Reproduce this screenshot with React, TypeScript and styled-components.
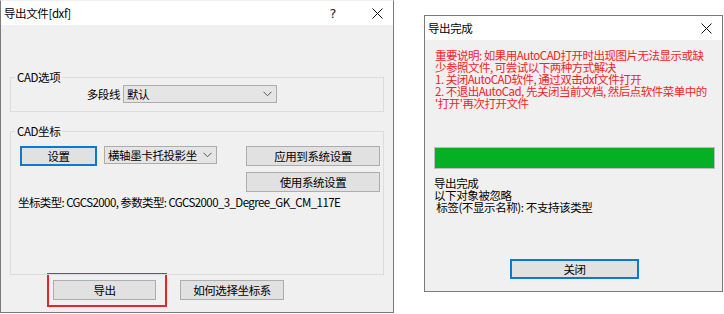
import styled, { createGlobalStyle } from "styled-components";

const Global = createGlobalStyle`
  body {
    margin: 0;
    background: #ffffff;
    font-family: "Noto Sans CJK SC", "Noto Sans", sans-serif;
    font-size: 11.5px;
    letter-spacing: -0.4px;
    color: #000000;
  }
`;

const Page = styled.div`
  width: 724px;
  height: 314px;
  display: flex;
  align-items: flex-start;
  gap: 30px;
`;

const Window = styled.div<{ $w: number; $h: number; $top?: number }>`
  width: ${(p) => p.$w}px;
  height: ${(p) => p.$h}px;
  margin-top: ${(p) => p.$top || 0}px;
  box-sizing: border-box;
  border: 1px solid #7a7a7a;
  border-top-color: ${(p) => (p.$top ? "#7a7a7a" : "transparent")};
  background: #f0f0f0;
  display: flex;
  flex-direction: column;
`;

const TitleBar = styled.div<{ $h: number }>`
  height: ${(p) => p.$h}px;
  flex-shrink: 0;
  background: #ffffff;
  display: flex;
  align-items: center;
  padding: 0 10px 0 3px;
  font-size: 11.5px;
`;

const TitleText = styled.div`
  flex: 1;
`;

const Help = styled.div`
  font-family: "DejaVu Sans", sans-serif;
  font-size: 13px;
  margin-right: 36px;
  color: #222;
`;

const Body = styled.div`
  display: flex;
  flex-direction: column;
  padding: 0 9px;
`;

const Group = styled.div<{ $top: number; $h: number }>`
  position: relative;
  margin-top: ${(p) => p.$top}px;
  height: ${(p) => p.$h}px;
  box-sizing: border-box;
  border: 1px solid #dcdcdc;
`;

const Legend = styled.div`
  position: absolute;
  left: 4px;
  top: -8px;
  padding: 0 2px;
  line-height: 14px;
  background: #f0f0f0;
`;

const Row = styled.div<{ $pt: number; $pl?: number }>`
  display: flex;
  align-items: flex-start;
  padding-top: ${(p) => p.$pt}px;
  padding-left: ${(p) => p.$pl || 0}px;
`;

const FieldLabel = styled.div`
  width: 109px;
  text-align: right;
  margin-right: 3px;
  line-height: 18px;
`;

const Select = styled.div<{ $w: number; $ml?: number }>`
  width: ${(p) => p.$w}px;
  height: 18px;
  margin-left: ${(p) => p.$ml || 0}px;
  box-sizing: border-box;
  background: #e5e5e5;
  border: 1px solid #acacac;
  display: flex;
  align-items: center;
  justify-content: space-between;
  padding: 0 4px 0 3px;
  white-space: nowrap;
`;

const Button = styled.div<{ $w: number; $focus?: boolean }>`
  width: ${(p) => p.$w}px;
  height: 20px;
  box-sizing: border-box;
  background: #e1e1e1;
  border: ${(p) => (p.$focus ? "2px solid #0a78d7" : "1px solid #adadad")};
  display: flex;
  align-items: center;
  justify-content: center;
  white-space: nowrap;
`;

const ButtonColumn = styled.div`
  display: flex;
  flex-direction: column;
  gap: 6px;
  margin-left: 29px;
`;

const InfoLine = styled.div`
  margin: 3px 0 0 7px;
  line-height: 14px;
  letter-spacing: -0.6px;
  white-space: nowrap;
`;

const Footer = styled.div`
  display: flex;
  align-items: center;
  margin: -2px 0 0 37px;
`;

const Highlight = styled.div`
  border: 2px solid #e8262a;
  padding: 5px 9px 5px 4px;
  margin-right: 13px;
`;

const Notice = styled.div`
  padding: 9px 0 0 10px;
  color: #f5221f;
  line-height: 12px;
  letter-spacing: -0.5px;
  white-space: nowrap;
`;

const Progress = styled.div`
  width: 281px;
  height: 22px;
  box-sizing: border-box;
  margin: 38px 0 0 9px;
  border: 1px solid #bcbcbc;
  background: #06b025;
`;

const Status = styled.div`
  margin: 8px 0 0 9px;
  line-height: 12px;
  white-space: pre;
`;

const CloseRow = styled.div`
  display: flex;
  justify-content: center;
  margin-top: 46px;
  padding-left: 2px;
`;

function CloseIcon() {
  return (
    <svg width="11" height="11" viewBox="0 0 11 11">
      <path d="M0.5 0.5 L10.5 10.5 M10.5 0.5 L0.5 10.5" stroke="#111" strokeWidth="1" fill="none" />
    </svg>
  );
}

function Chevron() {
  return (
    <svg width="9" height="6" viewBox="0 0 9 6">
      <polyline points="0.5,0.8 4.5,4.8 8.5,0.8" stroke="#555" strokeWidth="1" fill="none" />
    </svg>
  );
}

export default function App() {
  return (
    <>
      <Global />
      <Page>
        <Window $w={394} $h={313}>
          <TitleBar $h={24}>
            <TitleText>导出文件[dxf]</TitleText>
            <Help>?</Help>
            <CloseIcon />
          </TitleBar>
          <Body>
            <Group $top={52} $h={35}>
              <Legend>CAD选项</Legend>
              <Row $pt={7}>
                <FieldLabel>多段线</FieldLabel>
                <Select $w={154}>
                  <span>默认</span>
                  <Chevron />
                </Select>
              </Row>
            </Group>
            <Group $top={19} $h={144}>
              <Legend>CAD坐标</Legend>
              <Row $pt={14} $pl={9}>
                <Button $w={77} $focus>设置</Button>
                <Select $w={113} $ml={7}>
                  <span>横轴墨卡托投影坐</span>
                  <Chevron />
                </Select>
                <ButtonColumn>
                  <Button $w={134}>应用到系统设置</Button>
                  <Button $w={134}>使用系统设置</Button>
                </ButtonColumn>
              </Row>
              <InfoLine>坐标类型: CGCS2000, 参数类型: CGCS2000_3_Degree_GK_CM_117E</InfoLine>
            </Group>
            <Footer>
              <Highlight>
                <Button $w={103}>导出</Button>
              </Highlight>
              <Button $w={104}>如何选择坐标系</Button>
            </Footer>
          </Body>
        </Window>

        <Window $w={299} $h={277} $top={15}>
          <TitleBar $h={24}>
            <TitleText>导出完成</TitleText>
            <CloseIcon />
          </TitleBar>
          <Notice>
            <div>重要说明: 如果用AutoCAD打开时出现图片无法显示或缺</div>
            <div>少参照文件, 可尝试以下两种方式解决</div>
            <div>1. 关闭AutoCAD软件, 通过双击dxf文件打开</div>
            <div>2. 不退出AutoCad, 先关闭当前文档, 然后点软件菜单中的</div>
            <div>'打开'再次打开文件</div>
          </Notice>
          <Progress />
          <Status>{"导出完成\n以下对象被忽略\n 标签(不显示名称): 不支持该类型"}</Status>
          <CloseRow>
            <Button $w={129} $focus>关闭</Button>
          </CloseRow>
        </Window>
      </Page>
    </>
  );
}
